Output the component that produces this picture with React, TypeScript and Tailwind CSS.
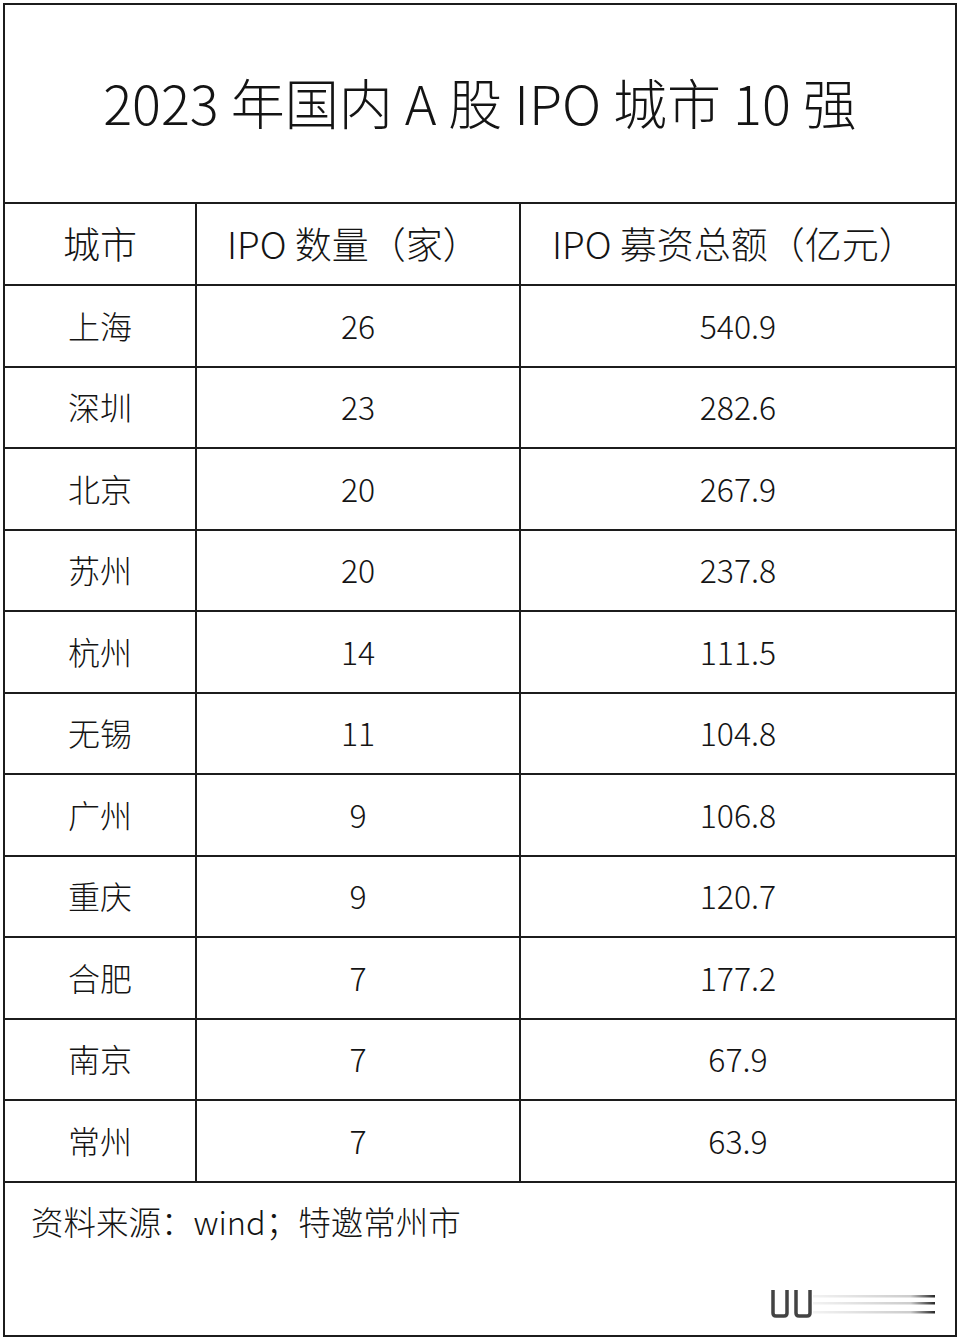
import React from 'react';

const rows: [string, string, string][] = [
  ['上海', '26', '540.9'],
  ['深圳', '23', '282.6'],
  ['北京', '20', '267.9'],
  ['苏州', '20', '237.8'],
  ['杭州', '14', '111.5'],
  ['无锡', '11', '104.8'],
  ['广州', '9', '106.8'],
  ['重庆', '9', '120.7'],
  ['合肥', '7', '177.2'],
  ['南京', '7', '67.9'],
  ['常州', '7', '63.9'],
];

const font = { fontFamily: '"Noto Sans CJK SC", "Noto Sans", sans-serif' };

const Watermark = () => (
  <svg width="170" height="32" viewBox="0 0 170 32" className="absolute bottom-[16px] right-[18px]">
    <defs>
      <linearGradient id="fade" x1="0" x2="1" y1="0" y2="0">
        <stop offset="0" stopColor="#000" stopOpacity="0.05" />
        <stop offset="0.8" stopColor="#000" stopOpacity="0.2" />
        <stop offset="1" stopColor="#000" stopOpacity="0.85" />
      </linearGradient>
    </defs>
    <path d="M6 3 V26 Q6 29 9 29 H17 Q20 29 20 26 V3" fill="none" stroke="#222" strokeOpacity="0.85" strokeWidth="3.5" />
    <path d="M29 3 V26 Q29 29 32 29 H40 Q43 29 43 26 V3" fill="none" stroke="#222" strokeOpacity="0.85" strokeWidth="3.5" />
    <rect x="46" y="8" width="122" height="2.5" fill="url(#fade)" />
    <rect x="46" y="15" width="122" height="2.5" fill="url(#fade)" />
    <rect x="46" y="24" width="122" height="2.5" fill="url(#fade)" />
  </svg>
);

export default function App() {
  return (
    <div className="h-[1338px] w-[960px] bg-white pl-[3px] pt-[3px] font-light text-[#141414]" style={font}>
      <div className="flex h-[1334px] w-[954px] flex-col border-2 border-[#1c1c1c]">
        <div className="flex h-[199px] items-center justify-center border-b-2 border-[#1c1c1c] pb-[4px] text-[54px] leading-none">
          2023 年国内 A 股 IPO 城市 10 强
        </div>
        <div className="flex h-[82px] border-b-2 border-[#1c1c1c] text-[37px] leading-none">
          <div className="flex w-[192px] items-center justify-center border-r-2 border-[#1c1c1c] pb-[2px]">城市</div>
          <div className="flex w-[324px] items-center border-r-2 border-[#1c1c1c] pb-[2px] pl-[30px]">
            IPO 数量（家）
          </div>
          <div className="flex flex-1 items-center pb-[2px] pl-[31px]">IPO 募资总额（亿元）</div>
        </div>
        {rows.map(([city, count, amount]) => (
          <div key={city} className="flex h-[81.5px] border-b-2 border-[#1c1c1c] text-[32px] leading-none">
            <div className="flex w-[192px] items-center justify-center border-r-2 border-[#1c1c1c] pb-[2px]">{city}</div>
            <div className="flex w-[324px] items-center justify-center border-r-2 border-[#1c1c1c] pb-[2px]">{count}</div>
            <div className="flex flex-1 items-center justify-center pb-[2px]">{amount}</div>
          </div>
        ))}
        <div className="relative flex-1 pl-[26px] pt-[14px] text-[32.5px] leading-[48px]">
          资料来源：wind；特邀常州市
          <Watermark />
        </div>
      </div>
    </div>
  );
}
